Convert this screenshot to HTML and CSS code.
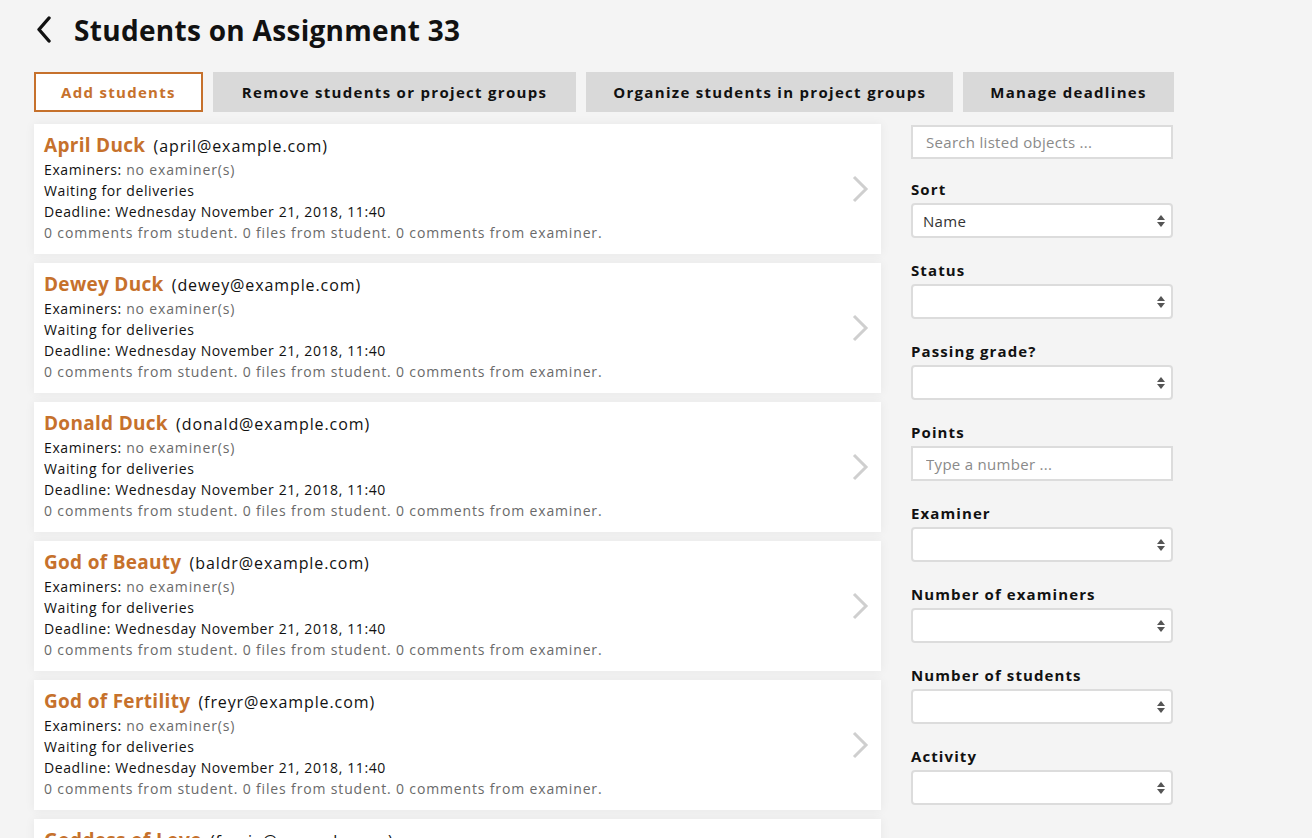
FILE: index.html
```html
<!DOCTYPE html>
<html lang="en">
<head>
    <meta charset="UTF-8">
    <title>Students on Assignment 33</title>
    <link rel="stylesheet" href="styles.css">
</head>
<body>
    <div class="page">
        <div class="page-header">
            <a href="#" class="back-link">
                <svg width="18" height="28" viewBox="0 0 18 28"><polyline points="14,2 4,13.5 14,25" fill="none" stroke="#111" stroke-width="3.4" stroke-linecap="round" stroke-linejoin="round"/></svg>
            </a>
            <h1>Students on Assignment 33</h1>
        </div>

        <div class="tabs">
            <a href="#" class="tab tab-active">Add students</a>
            <a href="#" class="tab tab-wide">Remove students or project groups</a>
            <a href="#" class="tab">Organize students in project groups</a>
            <a href="#" class="tab">Manage deadlines</a>
        </div>

        <div class="content">
            <div class="student-list">
                <a href="#" class="student-card">
                    <div class="student-info">
                        <div class="student-name"><strong>April Duck</strong> <span>(april@example.com)</span></div>
                        <div class="line">Examiners: <span class="muted">no examiner(s)</span></div>
                        <div class="line">Waiting for deliveries</div>
                        <div class="line">Deadline: Wednesday November 21, 2018, 11:40</div>
                        <div class="line muted">0 comments from student. 0 files from student. 0 comments from examiner.</div>
                    </div>
                    <svg class="chevron" width="18" height="28" viewBox="0 0 18 28"><polyline points="3,2 15,14 3,26" fill="none" stroke="#cfcfcf" stroke-width="3"/></svg>
                </a>
                <a href="#" class="student-card">
                    <div class="student-info">
                        <div class="student-name"><strong>Dewey Duck</strong> <span>(dewey@example.com)</span></div>
                        <div class="line">Examiners: <span class="muted">no examiner(s)</span></div>
                        <div class="line">Waiting for deliveries</div>
                        <div class="line">Deadline: Wednesday November 21, 2018, 11:40</div>
                        <div class="line muted">0 comments from student. 0 files from student. 0 comments from examiner.</div>
                    </div>
                    <svg class="chevron" width="18" height="28" viewBox="0 0 18 28"><polyline points="3,2 15,14 3,26" fill="none" stroke="#cfcfcf" stroke-width="3"/></svg>
                </a>
                <a href="#" class="student-card">
                    <div class="student-info">
                        <div class="student-name"><strong>Donald Duck</strong> <span>(donald@example.com)</span></div>
                        <div class="line">Examiners: <span class="muted">no examiner(s)</span></div>
                        <div class="line">Waiting for deliveries</div>
                        <div class="line">Deadline: Wednesday November 21, 2018, 11:40</div>
                        <div class="line muted">0 comments from student. 0 files from student. 0 comments from examiner.</div>
                    </div>
                    <svg class="chevron" width="18" height="28" viewBox="0 0 18 28"><polyline points="3,2 15,14 3,26" fill="none" stroke="#cfcfcf" stroke-width="3"/></svg>
                </a>
                <a href="#" class="student-card">
                    <div class="student-info">
                        <div class="student-name"><strong>God of Beauty</strong> <span>(baldr@example.com)</span></div>
                        <div class="line">Examiners: <span class="muted">no examiner(s)</span></div>
                        <div class="line">Waiting for deliveries</div>
                        <div class="line">Deadline: Wednesday November 21, 2018, 11:40</div>
                        <div class="line muted">0 comments from student. 0 files from student. 0 comments from examiner.</div>
                    </div>
                    <svg class="chevron" width="18" height="28" viewBox="0 0 18 28"><polyline points="3,2 15,14 3,26" fill="none" stroke="#cfcfcf" stroke-width="3"/></svg>
                </a>
                <a href="#" class="student-card">
                    <div class="student-info">
                        <div class="student-name"><strong>God of Fertility</strong> <span>(freyr@example.com)</span></div>
                        <div class="line">Examiners: <span class="muted">no examiner(s)</span></div>
                        <div class="line">Waiting for deliveries</div>
                        <div class="line">Deadline: Wednesday November 21, 2018, 11:40</div>
                        <div class="line muted">0 comments from student. 0 files from student. 0 comments from examiner.</div>
                    </div>
                    <svg class="chevron" width="18" height="28" viewBox="0 0 18 28"><polyline points="3,2 15,14 3,26" fill="none" stroke="#cfcfcf" stroke-width="3"/></svg>
                </a>
                <a href="#" class="student-card">
                    <div class="student-info">
                        <div class="student-name"><strong>Goddess of Love</strong> <span>(freyja@example.com)</span></div>
                        <div class="line">Examiners: <span class="muted">no examiner(s)</span></div>
                        <div class="line">Waiting for deliveries</div>
                        <div class="line">Deadline: Wednesday November 21, 2018, 11:40</div>
                        <div class="line muted">0 comments from student. 0 files from student. 0 comments from examiner.</div>
                    </div>
                    <svg class="chevron" width="18" height="28" viewBox="0 0 18 28"><polyline points="3,2 15,14 3,26" fill="none" stroke="#cfcfcf" stroke-width="3"/></svg>
                </a>
            </div>

            <div class="filters">
                <input type="text" class="search-input" placeholder="Search listed objects ...">

                <div class="filter-group">
                    <label>Sort</label>
                    <div class="select-wrap">
                        <select><option>Name</option></select>
                        <svg class="select-arrows" width="8" height="14" viewBox="0 0 8 14"><polygon points="4,1 8,6 0,6" fill="#555"/><polygon points="0,8 8,8 4,13" fill="#555"/></svg>
                    </div>
                </div>
                <div class="filter-group">
                    <label>Status</label>
                    <div class="select-wrap">
                        <select><option></option></select>
                        <svg class="select-arrows" width="8" height="14" viewBox="0 0 8 14"><polygon points="4,1 8,6 0,6" fill="#555"/><polygon points="0,8 8,8 4,13" fill="#555"/></svg>
                    </div>
                </div>
                <div class="filter-group">
                    <label>Passing grade?</label>
                    <div class="select-wrap">
                        <select><option></option></select>
                        <svg class="select-arrows" width="8" height="14" viewBox="0 0 8 14"><polygon points="4,1 8,6 0,6" fill="#555"/><polygon points="0,8 8,8 4,13" fill="#555"/></svg>
                    </div>
                </div>
                <div class="filter-group">
                    <label>Points</label>
                    <input type="text" class="number-input" placeholder="Type a number ...">
                </div>
                <div class="filter-group">
                    <label>Examiner</label>
                    <div class="select-wrap">
                        <select><option></option></select>
                        <svg class="select-arrows" width="8" height="14" viewBox="0 0 8 14"><polygon points="4,1 8,6 0,6" fill="#555"/><polygon points="0,8 8,8 4,13" fill="#555"/></svg>
                    </div>
                </div>
                <div class="filter-group">
                    <label>Number of examiners</label>
                    <div class="select-wrap">
                        <select><option></option></select>
                        <svg class="select-arrows" width="8" height="14" viewBox="0 0 8 14"><polygon points="4,1 8,6 0,6" fill="#555"/><polygon points="0,8 8,8 4,13" fill="#555"/></svg>
                    </div>
                </div>
                <div class="filter-group">
                    <label>Number of students</label>
                    <div class="select-wrap">
                        <select><option></option></select>
                        <svg class="select-arrows" width="8" height="14" viewBox="0 0 8 14"><polygon points="4,1 8,6 0,6" fill="#555"/><polygon points="0,8 8,8 4,13" fill="#555"/></svg>
                    </div>
                </div>
                <div class="filter-group">
                    <label>Activity</label>
                    <div class="select-wrap">
                        <select><option></option></select>
                        <svg class="select-arrows" width="8" height="14" viewBox="0 0 8 14"><polygon points="4,1 8,6 0,6" fill="#555"/><polygon points="0,8 8,8 4,13" fill="#555"/></svg>
                    </div>
                </div>
            </div>
        </div>
    </div>
</body>
</html>
```

FILE: styles.css
```css
* {
    margin: 0;
    padding: 0;
    box-sizing: border-box;
}

body {
    font-family: 'Open Sans', sans-serif;
    background: #f4f4f4;
    color: #111;
    overflow: hidden;
}

.page {
    padding: 0 34px;
    width: 1174px;
    box-sizing: content-box;
}

.page-header {
    display: flex;
    align-items: center;
    height: 60px;
}

.back-link {
    display: flex;
    width: 40px;
    margin-left: 1px;
    margin-right: -1px;
}

.page-header h1 {
    font-size: 28px;
    font-weight: 700;
    letter-spacing: 0.3px;
    color: #111;
}

.tabs {
    display: flex;
    gap: 10px;
    margin-top: 12px;
}

.tab {
    display: flex;
    align-items: center;
    height: 40px;
    padding: 0 25px;
    background: #d9d9d9;
    border: 2px solid #d9d9d9;
    color: #111;
    font-size: 15px;
    font-weight: 700;
    letter-spacing: 1.3px;
    text-decoration: none;
}

.tab-wide {
    padding: 0 27px;
}

.tab-active {
    background: #fff;
    border-color: #c6712c;
    color: #c6712c;
}

.content {
    display: flex;
    gap: 30px;
    margin-top: 12px;
}

.student-list {
    width: 847px;
    display: flex;
    flex-direction: column;
    gap: 9px;
}

.student-card {
    display: flex;
    align-items: center;
    justify-content: space-between;
    height: 130px;
    padding: 8px 12px 12px 10px;
    background: #fff;
    box-shadow: 0 0 10px rgba(0, 0, 0, 0.06);
    color: #111;
    text-decoration: none;
}

.chevron {
    margin-top: 4px;
}

.student-info {
    align-self: flex-start;
}

.student-name {
    line-height: 26px;
    font-size: 16px;
}

.student-name strong {
    color: #c6712c;
    font-size: 19px;
    font-weight: 700;
    letter-spacing: 0.3px;
    margin-right: 4px;
}

.student-name span {
    letter-spacing: 0.9px;
}

.line {
    font-size: 14px;
    line-height: 21px;
    letter-spacing: 0.6px;
}

.muted {
    color: #6a6a6a;
    letter-spacing: 0.85px;
}

.filters {
    width: 262px;
}

.search-input,
.number-input,
.select-wrap select {
    width: 100%;
    height: 35px;
    padding: 0 13px;
    border: 2px solid #dcdcdc;
    background: #fff;
    font-family: 'Open Sans', sans-serif;
    font-size: 15px;
    letter-spacing: 0.3px;
    color: #333;
    outline: none;
}

.search-input {
    height: 34px;
    margin-top: 1px;
}

.search-input::placeholder,
.number-input::placeholder {
    color: #8a8a8a;
}

.filter-group {
    margin-top: 20px;
}

.filter-group + .filter-group {
    margin-top: 22px;
}

.filter-group label {
    display: block;
    font-size: 15px;
    font-weight: 700;
    letter-spacing: 1.1px;
    line-height: 20px;
    margin-bottom: 4px;
}

.select-wrap {
    position: relative;
}

.select-wrap select {
    appearance: none;
    -webkit-appearance: none;
    border-radius: 4px;
    padding-left: 10px;
}

.select-arrows {
    position: absolute;
    right: 8px;
    top: 11px;
    pointer-events: none;
}
```
